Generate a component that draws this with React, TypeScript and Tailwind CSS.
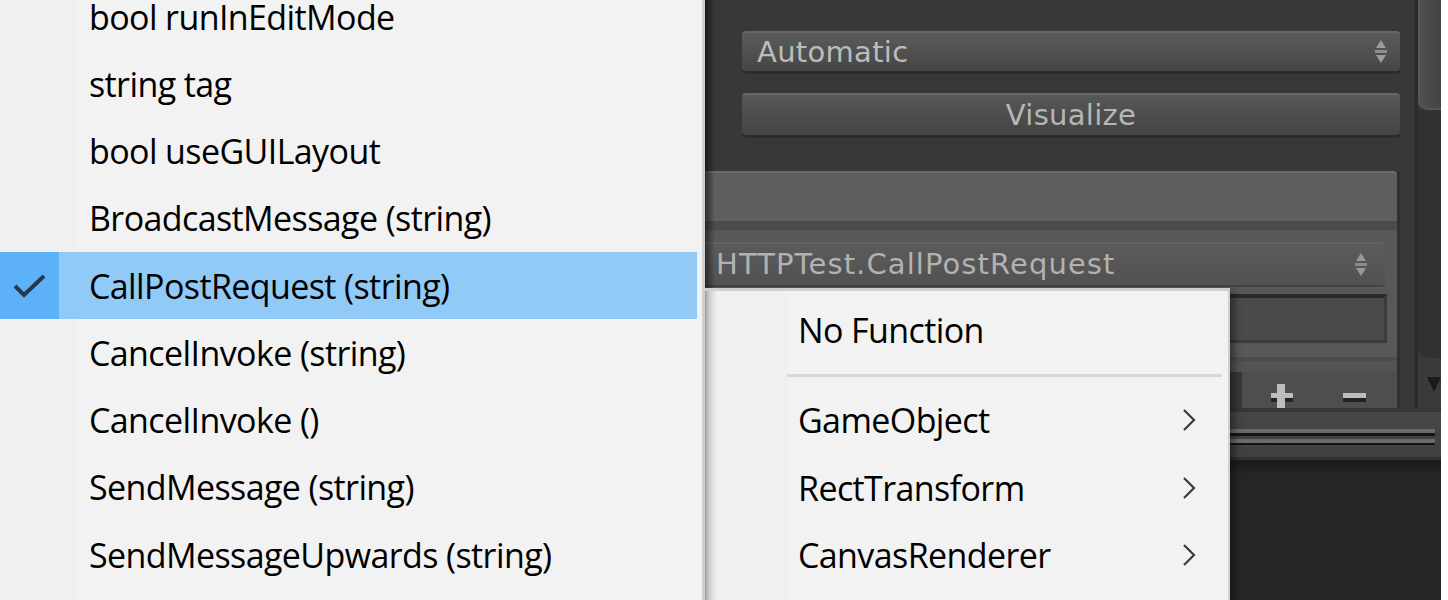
import React from "react";

const leftItems = [
  "bool runInEditMode",
  "string tag",
  "bool useGUILayout",
  "BroadcastMessage (string)",
  "CallPostRequest (string)",
  "CancelInvoke (string)",
  "CancelInvoke ()",
  "SendMessage (string)",
  "SendMessageUpwards (string)",
];

const menuFont = "font-['Open_Sans','Noto_Sans',sans-serif] text-[34px] tracking-[-0.6px] text-black leading-none whitespace-nowrap";
const unityFont = "font-['DejaVu_Sans',sans-serif] text-[29px] leading-none whitespace-nowrap";

function Check() {
  return (
    <svg width="34" height="26" viewBox="0 0 34 26">
      <polyline points="2,13 11,22 31,3" fill="none" stroke="#26384c" strokeWidth="4" />
    </svg>
  );
}

function UpDown({ color = "#9c9c9c" }: { color?: string }) {
  return (
    <svg width="14" height="24" viewBox="0 0 14 24">
      <polygon points="7,0 12,8 2,8" fill={color} />
      <rect x="1" y="10" width="12" height="3" fill={color} opacity="0.8" />
      <polygon points="2,15 12,15 7,23" fill={color} />
    </svg>
  );
}

function Chevron() {
  return (
    <svg width="14" height="24" viewBox="0 0 14 24">
      <polyline points="2,2 12,12 2,22" fill="none" stroke="#3c3c3c" strokeWidth="2.2" />
    </svg>
  );
}

function LeftMenu() {
  return (
    <div className="relative z-10 w-[705px] h-full shrink-0 overflow-hidden border-r-[3px] border-[#cfcfcf] bg-[linear-gradient(to_right,#f0f0f0_76px,#f2f2f2_76px)]">
      <div className="flex flex-col -mt-[17px]">
        {leftItems.map((t, i) =>
          i === 4 ? (
            <div key={t} className="flex h-[67.25px] shrink-0 mr-[5px] bg-[#91c9f7]">
              <div className="w-[59px] bg-[#5cb1f8] flex items-center justify-center">
                <Check />
              </div>
              <div className={"pl-[30px] flex items-center " + menuFont}>{t}</div>
            </div>
          ) : (
            <div key={t} className="flex h-[67.25px] shrink-0">
              <div className={"pl-[89px] flex items-center " + menuFont}>{t}</div>
            </div>
          )
        )}
      </div>
    </div>
  );
}

function PopupMenu() {
  const rows = ["GameObject", "RectTransform", "CanvasRenderer"];
  return (
    <div className="absolute left-[705px] top-[288px] w-[525px] h-[320px] z-20 border-t-[3px] border-r-[2px] border-t-[#cfcfcf] border-r-[#d0d0d0] shadow-[6px_2px_8px_-2px_rgba(0,0,0,0.45)] bg-[linear-gradient(to_right,#9a9a9a_0px,#c2c2c2_3px,#dcdcdc_7px,#f0f0f0_12px,#f0f0f0_82px,#f2f2f2_82px)] overflow-hidden">
      <div className="flex flex-col pt-[5.5px]">
        <div className={"h-[67.5px] shrink-0 flex items-center pl-[93px] " + menuFont}>No Function</div>
        <div className="h-[22.5px] shrink-0 flex items-center pl-[82px] pr-[6px]">
          <div className="h-[3px] w-full bg-[#d7d7d7]" />
        </div>
        {rows.map((r) => (
          <div key={r} className="h-[67.5px] shrink-0 flex items-center justify-between pl-[93px] pr-[32px]">
            <span className={menuFont}>{r}</span>
            <Chevron />
          </div>
        ))}
      </div>
    </div>
  );
}

function DarkPanel() {
  return (
    <div className="relative w-[736px] h-full shrink-0 flex flex-col bg-[#383838]">
      <div className="flex h-[408px] shrink-0">
        <div className="w-[710px] flex flex-col">
          <div className="ml-[37px] mr-[15px] mt-[31px] h-[40px] shrink-0 rounded-[4px] border-t-2 border-[#676767] bg-[linear-gradient(to_bottom,#5b5b5b,#464646)] shadow-[0_3px_0_#2b2b2b] flex items-center justify-between pl-[15px] pr-[12px]">
            <span className={unityFont + " text-[#bcbcbc] tracking-[0.3px]"}>Automatic</span>
            <UpDown />
          </div>
          <div className="ml-[37px] mr-[15px] mt-[22px] h-[42px] shrink-0 rounded-[4px] border-t-2 border-[#676767] bg-[linear-gradient(to_bottom,#575757,#444444)] shadow-[0_3px_0_#2b2b2b] flex items-center justify-center">
            <span className={unityFont + " text-[#b6b6b6] tracking-[0.3px]"}>Visualize</span>
          </div>
          <div className="mt-[36px] mr-[18px] flex flex-col shadow-[3px_0_0_#303030]">
            <div className="h-[50px] shrink-0 border-t-2 border-[#6b6b6b] bg-[#5e5e5e] rounded-tr-[4px]" />
            <div className="h-[9px] shrink-0 bg-[#4b4b4b]" />
            <div className="h-[127px] shrink-0 bg-[#585858] flex flex-col">
              <div className="mt-[12px] mr-[12px] h-[43px] shrink-0 rounded-[4px] border-t-2 border-[#636363] bg-[linear-gradient(to_bottom,#5b5b5b,#525252)] shadow-[0_2px_0_#444444] flex items-center justify-between pl-[11px] pr-[17px]">
                <span className={unityFont + " text-[#b2b2b2] tracking-[1.1px]"}>HTTPTest.CallPostRequest</span>
                <UpDown color="#979797" />
              </div>
              <div className="mt-[9px] mr-[10px] h-[49px] shrink-0 border-[3px] border-[#3c3c3c] border-t-[4px] border-t-[#2a2a2a] bg-[#4a4a4a]" />
            </div>
            <div className="h-[4px] shrink-0 bg-[#4c4c4c]" />
            <div className="h-[11px] shrink-0 bg-[#535353]" />
            <div className="h-[36px] shrink-0 flex justify-end bg-[#383838]">
              <div className="w-[155px] h-full bg-[#4e4e4e] flex items-start">
                <svg className="ml-[29px] mt-[12px]" width="22" height="24" viewBox="0 0 22 24">
                  <rect x="0" y="14" width="22" height="4" fill="#222222" />
                  <rect x="0" y="9" width="22" height="5" fill="#bdbdbd" />
                  <rect x="6" y="0" width="8" height="24" fill="#bdbdbd" />
                </svg>
                <svg className="ml-[50px] mt-[21px]" width="23" height="9" viewBox="0 0 23 9">
                  <rect x="0" y="0" width="23" height="5" fill="#bdbdbd" />
                  <rect x="0" y="5" width="23" height="4" fill="#222222" />
                </svg>
              </div>
            </div>
          </div>
        </div>
        <div className="w-[26px] flex flex-col border-l-[3px] border-[#2b2b2b] bg-[#3a3a3a]">
          <div className="h-[110px] shrink-0 rounded-bl-[10px] border-l-2 border-b-2 border-[#575757] bg-[linear-gradient(to_right,#505050,#434343)]" />
          <div className="h-[248px] shrink-0 rounded-bl-[9px] bg-[#313131]" />
          <div className="flex-1 pt-[19px] pl-[9px]">
            <svg width="14" height="15" viewBox="0 0 14 15">
              <polygon points="0,0 14,0 7,15" fill="#1a1a1a" />
            </svg>
          </div>
        </div>
      </div>
      <div className="h-[52px] shrink-0 flex flex-col bg-[linear-gradient(to_bottom,#474747,#3f3f3f)]">
        <div className="h-[4px] shrink-0 bg-[#363636]" />
        <div className="h-[17px] shrink-0" />
        <div className="h-[4px] shrink-0 mr-[6px] bg-[#6b6b6b]" />
        <div className="h-[3px] shrink-0 mr-[6px] bg-[#141414]" />
        <div className="h-[3px] shrink-0" />
        <div className="h-[4px] shrink-0 mr-[6px] bg-[#6b6b6b]" />
        <div className="h-[2px] shrink-0 mr-[6px] bg-[#141414]" />
        <div className="h-[12px] shrink-0" />
        <div className="h-[3px] shrink-0 bg-[#303030]" />
      </div>
      <div className="flex-1 bg-[linear-gradient(to_bottom,#1b1b1b,#262626_16px,#262626)]" />
      <div className="absolute left-0 top-0 bottom-0 w-[10px] bg-[linear-gradient(to_right,rgba(0,0,0,0.5),rgba(0,0,0,0))]" />
    </div>
  );
}

export default function App() {
  return (
    <div className="relative flex w-[1448px] h-[600px] overflow-hidden bg-white">
      <LeftMenu />
      <DarkPanel />
      <div className="flex-1 bg-white" />
      <PopupMenu />
    </div>
  );
}
